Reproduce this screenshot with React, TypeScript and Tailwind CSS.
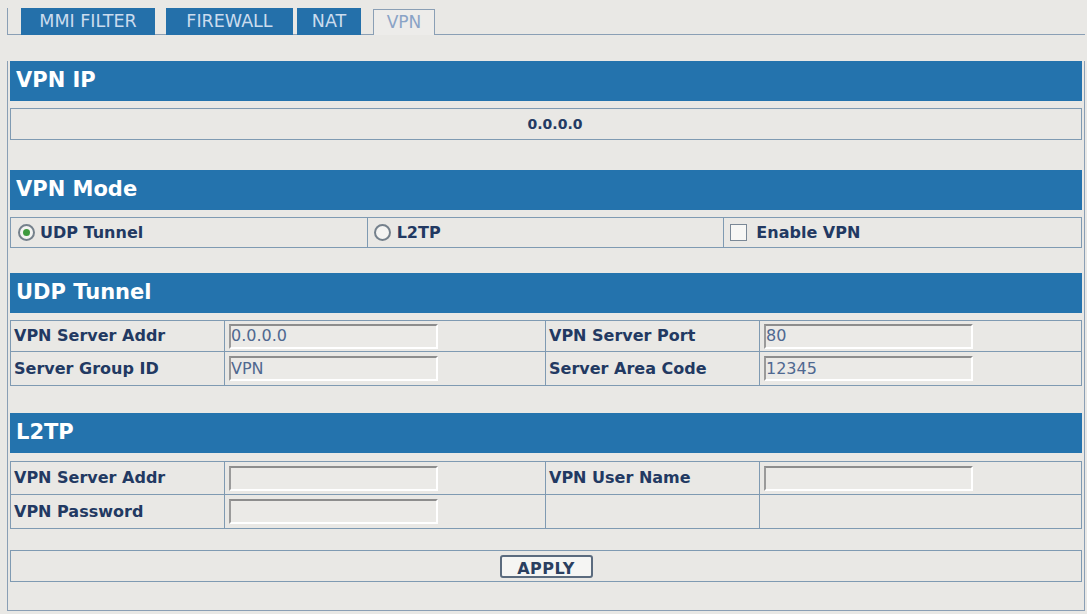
import React from "react";

const font = "font-['DejaVu_Sans','Verdana',sans-serif]";

function Header({ title, className = "" }: { title: string; className?: string }) {
  return (
    <div
      className={`h-[40px] bg-[#2473ad] flex items-center pl-[6px] text-white font-bold text-[21px] ${className}`}
    >
      {title}
    </div>
  );
}

function Field({ value = "" }: { value?: string }) {
  return (
    <div className="ml-[4px] w-[209px] h-[25px] border-2 border-t-[#8d8d8d] border-l-[#9a9a9a] border-b-white border-r-white bg-[#ebeae7] flex items-center text-[16px] text-[#4f6890]">
      {value}
    </div>
  );
}

function Label({ text }: { text: string }) {
  return <span className="pl-[3px] font-bold text-[16px] text-[#223962]">{text}</span>;
}

type Row = [string, string | null, string, string | null];

function FormTable({ rows, rowH }: { rows: Row[]; rowH: string[] }) {
  return (
    <div className="border border-[#7f9ab2] grid grid-cols-[20%_30%_20%_30%]">
      {rows.map((r, i) => {
        const last = i === rows.length - 1;
        const cell = `${rowH[i]} flex items-center ${last ? "" : "border-b border-[#7f9ab2]"}`;
        return (
          <React.Fragment key={i}>
            <div className={`${cell} border-r border-[#7f9ab2]`}>
              {r[0] && <Label text={r[0]} />}
            </div>
            <div className={`${cell} border-r border-[#7f9ab2]`}>
              {r[1] !== null && <Field value={r[1]} />}
            </div>
            <div className={`${cell} border-r border-[#7f9ab2]`}>
              {r[2] && <Label text={r[2]} />}
            </div>
            <div className={cell}>{r[3] !== null && <Field value={r[3]} />}</div>
          </React.Fragment>
        );
      })}
    </div>
  );
}

export default function App() {
  return (
    <div className={`w-[1087px] h-[614px] bg-[#e9e8e5] pt-[8px] pl-[7px] ${font}`}>
      {/* tabs */}
      <div className="flex h-[27px] w-[1078px] border-l border-[#8a9fb5]">
        <div className="w-[13px] border-b border-[#8a9fb5]" />
        <div className="w-[134px] bg-[#2470aa] text-[#cbdcee] text-[17.5px] flex items-center justify-center">
          MMI FILTER
        </div>
        <div className="w-[11px] border-b border-[#8a9fb5]" />
        <div className="w-[127px] bg-[#2470aa] text-[#cbdcee] text-[17.5px] flex items-center justify-center">
          FIREWALL
        </div>
        <div className="w-[4px] border-b border-[#8a9fb5]" />
        <div className="w-[64px] bg-[#2470aa] text-[#cbdcee] text-[17.5px] flex items-center justify-center">
          NAT
        </div>
        <div className="w-[12px] border-b border-[#8a9fb5]" />
        <div className="w-[62px] mt-[1px] border-t border-l border-r border-[#8a9fb5] bg-[#edecea] text-[#8aa3c6] text-[17px] flex items-center justify-center">
          VPN
        </div>
        <div className="flex-1 border-b border-[#8a9fb5]" />
      </div>

      {/* panel */}
      <div className="w-[1078px] border-l border-r border-b border-[#8a9fb5] px-[2px] pb-[28px]">
        <Header title="VPN IP" className="mt-[26px]" />
        <div className="mt-[7px] h-[32px] border border-[#7f9ab2] flex items-center justify-center pl-[18px] font-bold text-[14px] text-[#243a63]">
          0.0.0.0
        </div>

        <Header title="VPN Mode" className="mt-[30px]" />
        <div className="mt-[7px] h-[31px] border border-[#7f9ab2] grid grid-cols-3">
          <div className="flex items-center gap-[5px] pl-[7px] border-r border-[#7f9ab2]">
            <span className="w-[17px] h-[17px] rounded-full border-2 border-[#75818c] bg-[#f4f4f2] flex items-center justify-center">
              <span className="w-[7px] h-[7px] rounded-full bg-[#3e9a3e]" />
            </span>
            <span className="font-bold text-[16px] text-[#223962]">UDP Tunnel</span>
          </div>
          <div className="flex items-center gap-[6px] pl-[6px] border-r border-[#7f9ab2]">
            <span className="w-[17px] h-[17px] rounded-full border-2 border-[#75818c] bg-[#f4f4f2]" />
            <span className="font-bold text-[16px] text-[#223962]">L2TP</span>
          </div>
          <div className="flex items-center gap-[9px] pl-[6px]">
            <span className="w-[17px] h-[17px] border border-[#7a8896] bg-[#f7f7f5]" />
            <span className="font-bold text-[16px] text-[#223962]">Enable VPN</span>
          </div>
        </div>

        <Header title="UDP Tunnel" className="mt-[25px]" />
        <div className="mt-[7px]">
          <FormTable
            rowH={["h-[31px]", "h-[33px]"]}
            rows={[
              ["VPN Server Addr", "0.0.0.0", "VPN Server Port", "80"],
              ["Server Group ID", "VPN", "Server Area Code", "12345"],
            ]}
          />
        </div>

        <Header title="L2TP" className="mt-[27px]" />
        <div className="mt-[8px]">
          <FormTable
            rowH={["h-[33px]", "h-[33px]"]}
            rows={[
              ["VPN Server Addr", "", "VPN User Name", ""],
              ["VPN Password", "", "", null],
            ]}
          />
        </div>

        <div className="mt-[21px] h-[32px] border border-[#7f9ab2] flex items-center justify-center">
          <button className="w-[93px] h-[23px] rounded-[3px] border-2 border-[#5b6b7e] bg-[#f5f5f3] font-bold text-[16px] text-[#2b3f60] tracking-[0.5px]">
            APPLY
          </button>
        </div>
      </div>
    </div>
  );
}
